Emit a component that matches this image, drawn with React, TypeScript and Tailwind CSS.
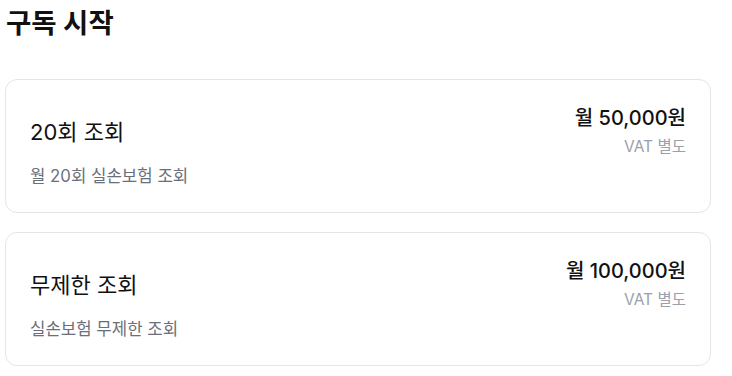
import React from "react";

const plans = [
  { id: "20", name: "20회 조회", desc: "월 20회 실손보험 조회", price: "월 50,000원" },
  { id: "unlimited", name: "무제한 조회", desc: "실손보험 무제한 조회", price: "월 100,000원" },
];

export default function App() {
  return (
    <div
      className="min-h-screen bg-white px-[5px] text-[#111]"
      style={{ fontFamily: 'Inter, "Noto Sans CJK KR", sans-serif' }}
    >
      <h1 className="pt-[4px] pl-[1px] text-[27.5px] font-bold leading-[38px]">구독 시작</h1>

      {/* plan cards */}
      <div className="mt-[37px] flex w-[706px] flex-col gap-[19px]">
        {plans.map((plan) => (
          <div
            key={plan.id}
            className="flex h-[134px] items-start justify-between rounded-xl border border-[#e5e5e5] px-6 pt-6"
          >
            <div className="flex flex-col">
              <span className="mt-[13px] text-[22px] leading-[30px]">{plan.name}</span>
              <span className="mt-[17px] text-[16.75px] leading-[24px] text-[#6b6f7b]">{plan.desc}</span>
            </div>
            <div className="flex flex-col items-end">
              <span className="text-[20px] font-medium leading-[28px]">{plan.price}</span>
              <span className="mt-[4px] text-[15.5px] leading-[22px] text-[#9ca0ab]">VAT 별도</span>
            </div>
          </div>
        ))}
      </div>
    </div>
  );
}
